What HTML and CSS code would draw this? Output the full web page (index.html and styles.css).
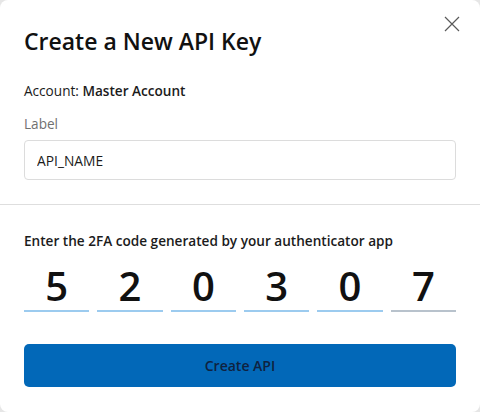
FILE: index.html
```html
<!DOCTYPE html>
<html lang="en">
<head>
<meta charset="utf-8">
<title>Create a New API Key</title>
<link rel="stylesheet" href="styles.css">
</head>
<body>
<div class="modal">
  <button class="close" aria-label="Close">
    <svg width="16" height="16" viewBox="0 0 16 16"><path d="M1 1L15 15M15 1L1 15" stroke="#5a5a5a" stroke-width="1.2" fill="none"/></svg>
  </button>
  <section class="top">
    <h1 class="title">Create a New API Key</h1>
    <p class="account">Account: <strong>Master Account</strong></p>
    <label class="label" for="apiname">Label</label>
    <input id="apiname" class="input" type="text" value="API_NAME">
  </section>
  <section class="bottom">
    <p class="prompt">Enter the 2FA code generated by your authenticator app</p>
    <div class="code">
      <div class="digit">5</div>
      <div class="digit">2</div>
      <div class="digit">0</div>
      <div class="digit">3</div>
      <div class="digit">0</div>
      <div class="digit last">7</div>
    </div>
    <button class="submit">Create API</button>
  </section>
</div>
</body>
</html>
```
FILE: styles.css
```css
html, body {
  margin: 0;
  padding: 0;
}
body {
  width: 480px;
  height: 412px;
  background: #e6e6e6;
  font-family: "Open Sans", "Noto Sans", sans-serif;
  color: #1b1b1b;
}
.modal {
  position: relative;
  box-sizing: border-box;
  width: 480px;
  height: 412px;
  background: #fff;
  border-radius: 8px;
}
.close {
  position: absolute;
  top: 16px;
  right: 20px;
  width: 16px;
  height: 16px;
  padding: 0;
  border: 0;
  background: none;
  display: flex;
}
.top {
  padding: 26px 24px 24px;
  border-bottom: 1px solid #dedede;
  display: flex;
  flex-direction: column;
}
.title {
  margin: 0;
  font-size: 23px;
  line-height: 30px;
  font-weight: 600;
  letter-spacing: 0;
  color: #111;
}
.account {
  margin: 25px 0 0;
  font-size: 13.6px;
  line-height: 20px;
}
.account strong {
  font-weight: 600;
}
.label {
  margin-top: 13px;
  font-size: 13.6px;
  line-height: 20px;
  color: #707070;
}
.input {
  margin-top: 6px;
  box-sizing: border-box;
  height: 40px;
  border: 1px solid #dcdcdc;
  border-radius: 4px;
  padding: 0 12px;
  font: inherit;
  font-size: 13.8px;
  color: #1b1b1b;
  outline: none;
}
.bottom {
  padding: 26px 24px 0;
  display: flex;
  flex-direction: column;
}
.prompt {
  margin: 0;
  font-size: 13.6px;
  line-height: 20px;
  font-weight: 600;
  color: #1b1b1b;
}
.code {
  margin-top: 11px;
  display: grid;
  grid-template-columns: repeat(6, 1fr);
  column-gap: 8px;
}
.digit {
  height: 48px;
  line-height: 48px;
  text-align: center;
  font-size: 40px;
  font-weight: 600;
  color: #111;
  border-bottom: 2px solid #9ccbef;
}
.digit.last {
  border-bottom-color: #b8c2cc;
}
.submit {
  margin-top: 32px;
  height: 43px;
  border: 0;
  border-radius: 5px;
  background: #0268b8;
  color: #0f2240;
  font: inherit;
  font-size: 14px;
  font-weight: 600;
}
```
